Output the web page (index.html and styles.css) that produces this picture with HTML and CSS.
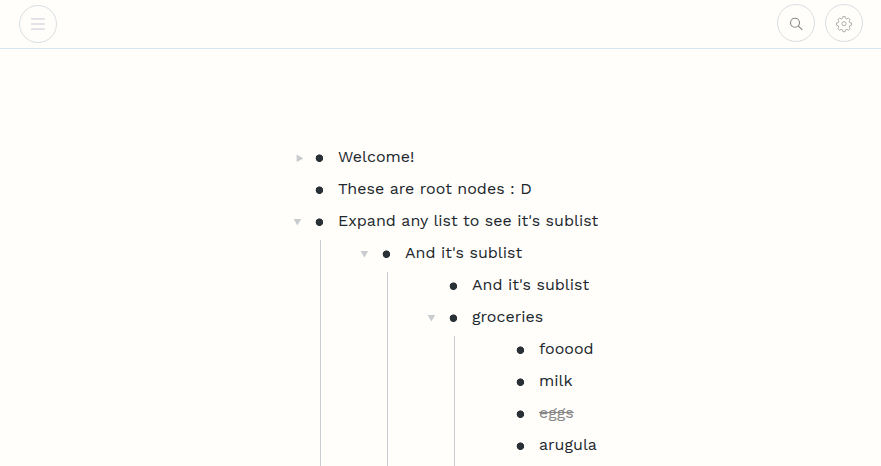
FILE: index.html
```
<!DOCTYPE html>
<html lang="en">
<head>
<meta charset="utf-8">
<title>Lists</title>
<link rel="stylesheet" href="styles.css">
</head>
<body>
<header class="bar">
  <button class="round" aria-label="Menu"><svg width="38" height="38" viewBox="0 0 38 38"><path class="lines" d="M12 14h14M12 19h14M12 24h14"/></svg></button>
  <div class="tools">
    <button class="round" aria-label="Search"><svg width="38" height="38" viewBox="0 0 38 38"><g class="search"><circle cx="18" cy="18.7" r="4.5"/><path d="M21.2 21.9l4.1 4"/></g></svg></button>
    <button class="round" aria-label="Settings"><svg width="38" height="38" viewBox="0 0 38 38"><g class="gear" transform="translate(19 19.7) scale(.9) translate(-19 -19)"><circle cx="19" cy="19" r="2.3"/><path d="M17.8 11.1h2.4l.5 2.1 1.5.6 1.9-1.1 1.7 1.7-1.1 1.9.6 1.5 2.1.5v2.4l-2.1.5-.6 1.5 1.1 1.9-1.7 1.7-1.9-1.1-1.5.6-.5 2.1h-2.4l-.5-2.1-1.5-.6-1.9 1.1-1.7-1.7 1.1-1.9-.6-1.5-2.1-.5v-2.4l2.1-.5.6-1.5-1.1-1.9 1.7-1.7 1.9 1.1 1.5-.6z"/></g></svg></button>
  </div>
</header>
<main>
  <ul class="tree">
    <li><div class="row"><i class="arrow closed"></i><i class="dot"></i><span>Welcome!</span></div></li>
    <li><div class="row"><i class="arrow"></i><i class="dot"></i><span>These are root nodes : D</span></div></li>
    <li><div class="row"><i class="arrow open"></i><i class="dot"></i><span>Expand any list to see it's sublist</span></div>
      <ul>
        <li><div class="row"><i class="arrow open"></i><i class="dot"></i><span>And it's sublist</span></div>
          <ul>
            <li><div class="row"><i class="arrow"></i><i class="dot"></i><span>And it's sublist</span></div></li>
            <li><div class="row"><i class="arrow open"></i><i class="dot"></i><span>groceries</span></div>
              <ul class="last">
                <li><div class="row"><i class="arrow"></i><i class="dot"></i><span>fooood</span></div></li>
                <li><div class="row"><i class="arrow"></i><i class="dot"></i><span>milk</span></div></li>
                <li><div class="row"><i class="arrow"></i><i class="dot"></i><span class="done">eggs</span></div></li>
                <li><div class="row"><i class="arrow"></i><i class="dot"></i><span>arugula</span></div></li>
              </ul>
            </li>
          </ul>
        </li>
      </ul>
    </li>
  </ul>
</main>
</body>
</html>
```
FILE: styles.css
```
* { box-sizing: border-box; }
html, body { height: 100%; }
body {
  margin: 0;
  overflow: hidden;
  background: #fffefb;
  color: #20262b;
  font: 16px/32px "Work Sans", "Open Sans", sans-serif;
  letter-spacing: .015px;
}
.bar {
  height: 49px;
  padding: 0 18px 0 19px;
  display: flex;
  justify-content: space-between;
  align-items: center;
  border-bottom: 1px solid #d5e5f3;
}
.tools { display: flex; gap: 10px; margin-bottom: 2px; }
.round {
  width: 38px;
  height: 38px;
  padding: 0;
  border: 1px solid #d9dfe3;
  border-radius: 50%;
  background: none;
  display: flex;
  align-items: center;
  justify-content: center;
}
.round svg { flex: none; fill: none; }
.lines { stroke: #e3e3e8; stroke-width: 2; }
.search { stroke: #858585; stroke-width: 1.1; }
.gear { stroke: #adadad; stroke-width: 1.1; stroke-linejoin: round; }
main { padding: 92px 0 0 282px; }
ul { list-style: none; margin: 0; padding: 0; }
.tree ul {
  padding-left: 67px;
  background: linear-gradient(#c9ccd0, #c9ccd0) 38px 3px / 1px 100% no-repeat;
}
.tree .last { padding-bottom: 5px; }
.row { display: flex; align-items: center; height: 32px; white-space: nowrap; }
.arrow { width: 33px; height: 8px; padding-left: 11px; margin-top: 2px; display: flex; }
.open::before, .closed::before { content: ""; background: #c8cccf; }
.open::before { width: 9px; height: 7px; margin-top: 1px; clip-path: polygon(.6px 0, 8.2px 0, 4.4px 6.6px); }
.closed::before { width: 8px; height: 8px; margin: 0 0 0 3px; clip-path: polygon(.6px .6px, 7.4px 4.4px, .6px 8px); }
.dot { width: 9px; height: 9px; margin: 2px 14px 0 0; background: radial-gradient(circle at 4.4px 4.2px, #293136 3.4px, transparent 4.1px); }
.done { color: #858585; text-decoration: line-through; }
```
